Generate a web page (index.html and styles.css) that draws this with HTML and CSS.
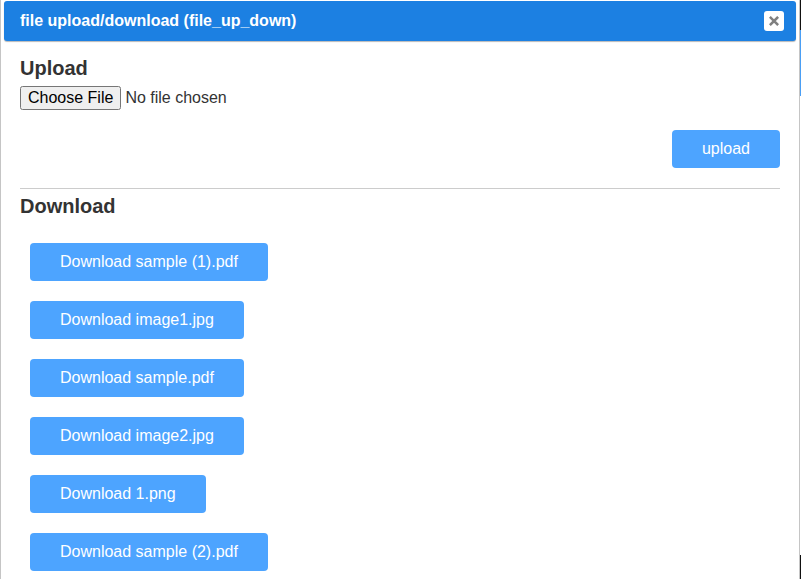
FILE: index.html
```html
<!DOCTYPE html>
<html lang="en">
<head>
  <meta charset="UTF-8" />
  <meta name="viewport" content="width=device-width, initial-scale=1.0" />
  <title>file upload/download</title>
  <link rel="stylesheet" href="styles.css">
</head>
<body>
  <div class="dialog">
    <div class="titlebar">
      <span class="title">file upload/download (file_up_down)</span>
      <button class="close" title="Close">
        <svg width="10" height="10" viewBox="0 0 10 10">
          <path d="M1.8 1.8 L8.2 8.2 M8.2 1.8 L1.8 8.2" stroke="#808080" stroke-width="2.6" stroke-linecap="square" />
        </svg>
      </button>
    </div>

    <div class="content">
      <h3>Upload</h3>
      <input type="file" id="fileInput" class="file" />
      <div class="upload-row">
        <button class="btn">upload</button>
      </div>

      <hr />

      <h3 class="download-title">Download</h3>
      <div class="downloads">
        <button class="btn">Download sample (1).pdf</button>
        <button class="btn">Download image1.jpg</button>
        <button class="btn">Download sample.pdf</button>
        <button class="btn">Download image2.jpg</button>
        <button class="btn">Download 1.png</button>
        <button class="btn">Download sample (2).pdf</button>
      </div>
    </div>
  </div>
  <div class="page-edge"></div>
</body>
</html>
```

FILE: styles.css
```css
html, body {
  margin: 0;
  height: 100%;
}
body {
  display: flex;
  overflow: hidden;
  background: #fff;
  font-family: "Liberation Sans", Arial, sans-serif;
}
.dialog {
  width: 800px;
  flex: none;
  box-sizing: border-box;
  padding: 1px 3px 0 3px;
  border-left: 1px solid #c5c5c5;
  border-right: 1px solid #c5c5c5;
  background: #fff;
}
.page-edge {
  flex: 1;
  background: linear-gradient(#111 0, #111 30px, #4a9ff5 30px, #4a9ff5 96px, #fff 96px, #fff 555px, #111 555px);
}
.titlebar {
  height: 40px;
  display: flex;
  align-items: center;
  justify-content: space-between;
  padding: 0 12px 0 16px;
  background: #1c80e2;
  border-radius: 3px;
  box-shadow: 0 1px 1px #b8b8b8;
}
.title {
  color: #fff;
  font-size: 16px;
  font-weight: bold;
}
.close {
  width: 20px;
  height: 20px;
  padding: 0;
  border: none;
  border-radius: 3px;
  background: #fff;
  display: flex;
  align-items: center;
  justify-content: center;
  cursor: pointer;
}
.content {
  padding: 0 16px 0 16px;
}
h3 {
  margin: 16px 0 0;
  font-size: 20px;
  line-height: 23px;
  color: #333;
}
.file {
  display: block;
  margin-top: 6px;
  font-family: inherit;
  font-size: 16px;
  color: #333;
}
.upload-row {
  display: flex;
  justify-content: flex-end;
  margin-top: 20px;
}
.btn {
  height: 38px;
  padding: 0 30px;
  border: none;
  border-radius: 4px;
  background: #4da4ff;
  color: #fff;
  font-family: inherit;
  font-size: 16px;
  cursor: pointer;
}
.btn:hover {
  background: #3a95f5;
}
hr {
  border: 0;
  border-top: 1px solid #ccc;
  margin: 20px 0 0;
}
.download-title {
  margin-top: 6px;
}
.downloads {
  display: flex;
  flex-direction: column;
  align-items: flex-start;
  gap: 20px;
  margin-top: 25px;
  padding-left: 10px;
}
```
